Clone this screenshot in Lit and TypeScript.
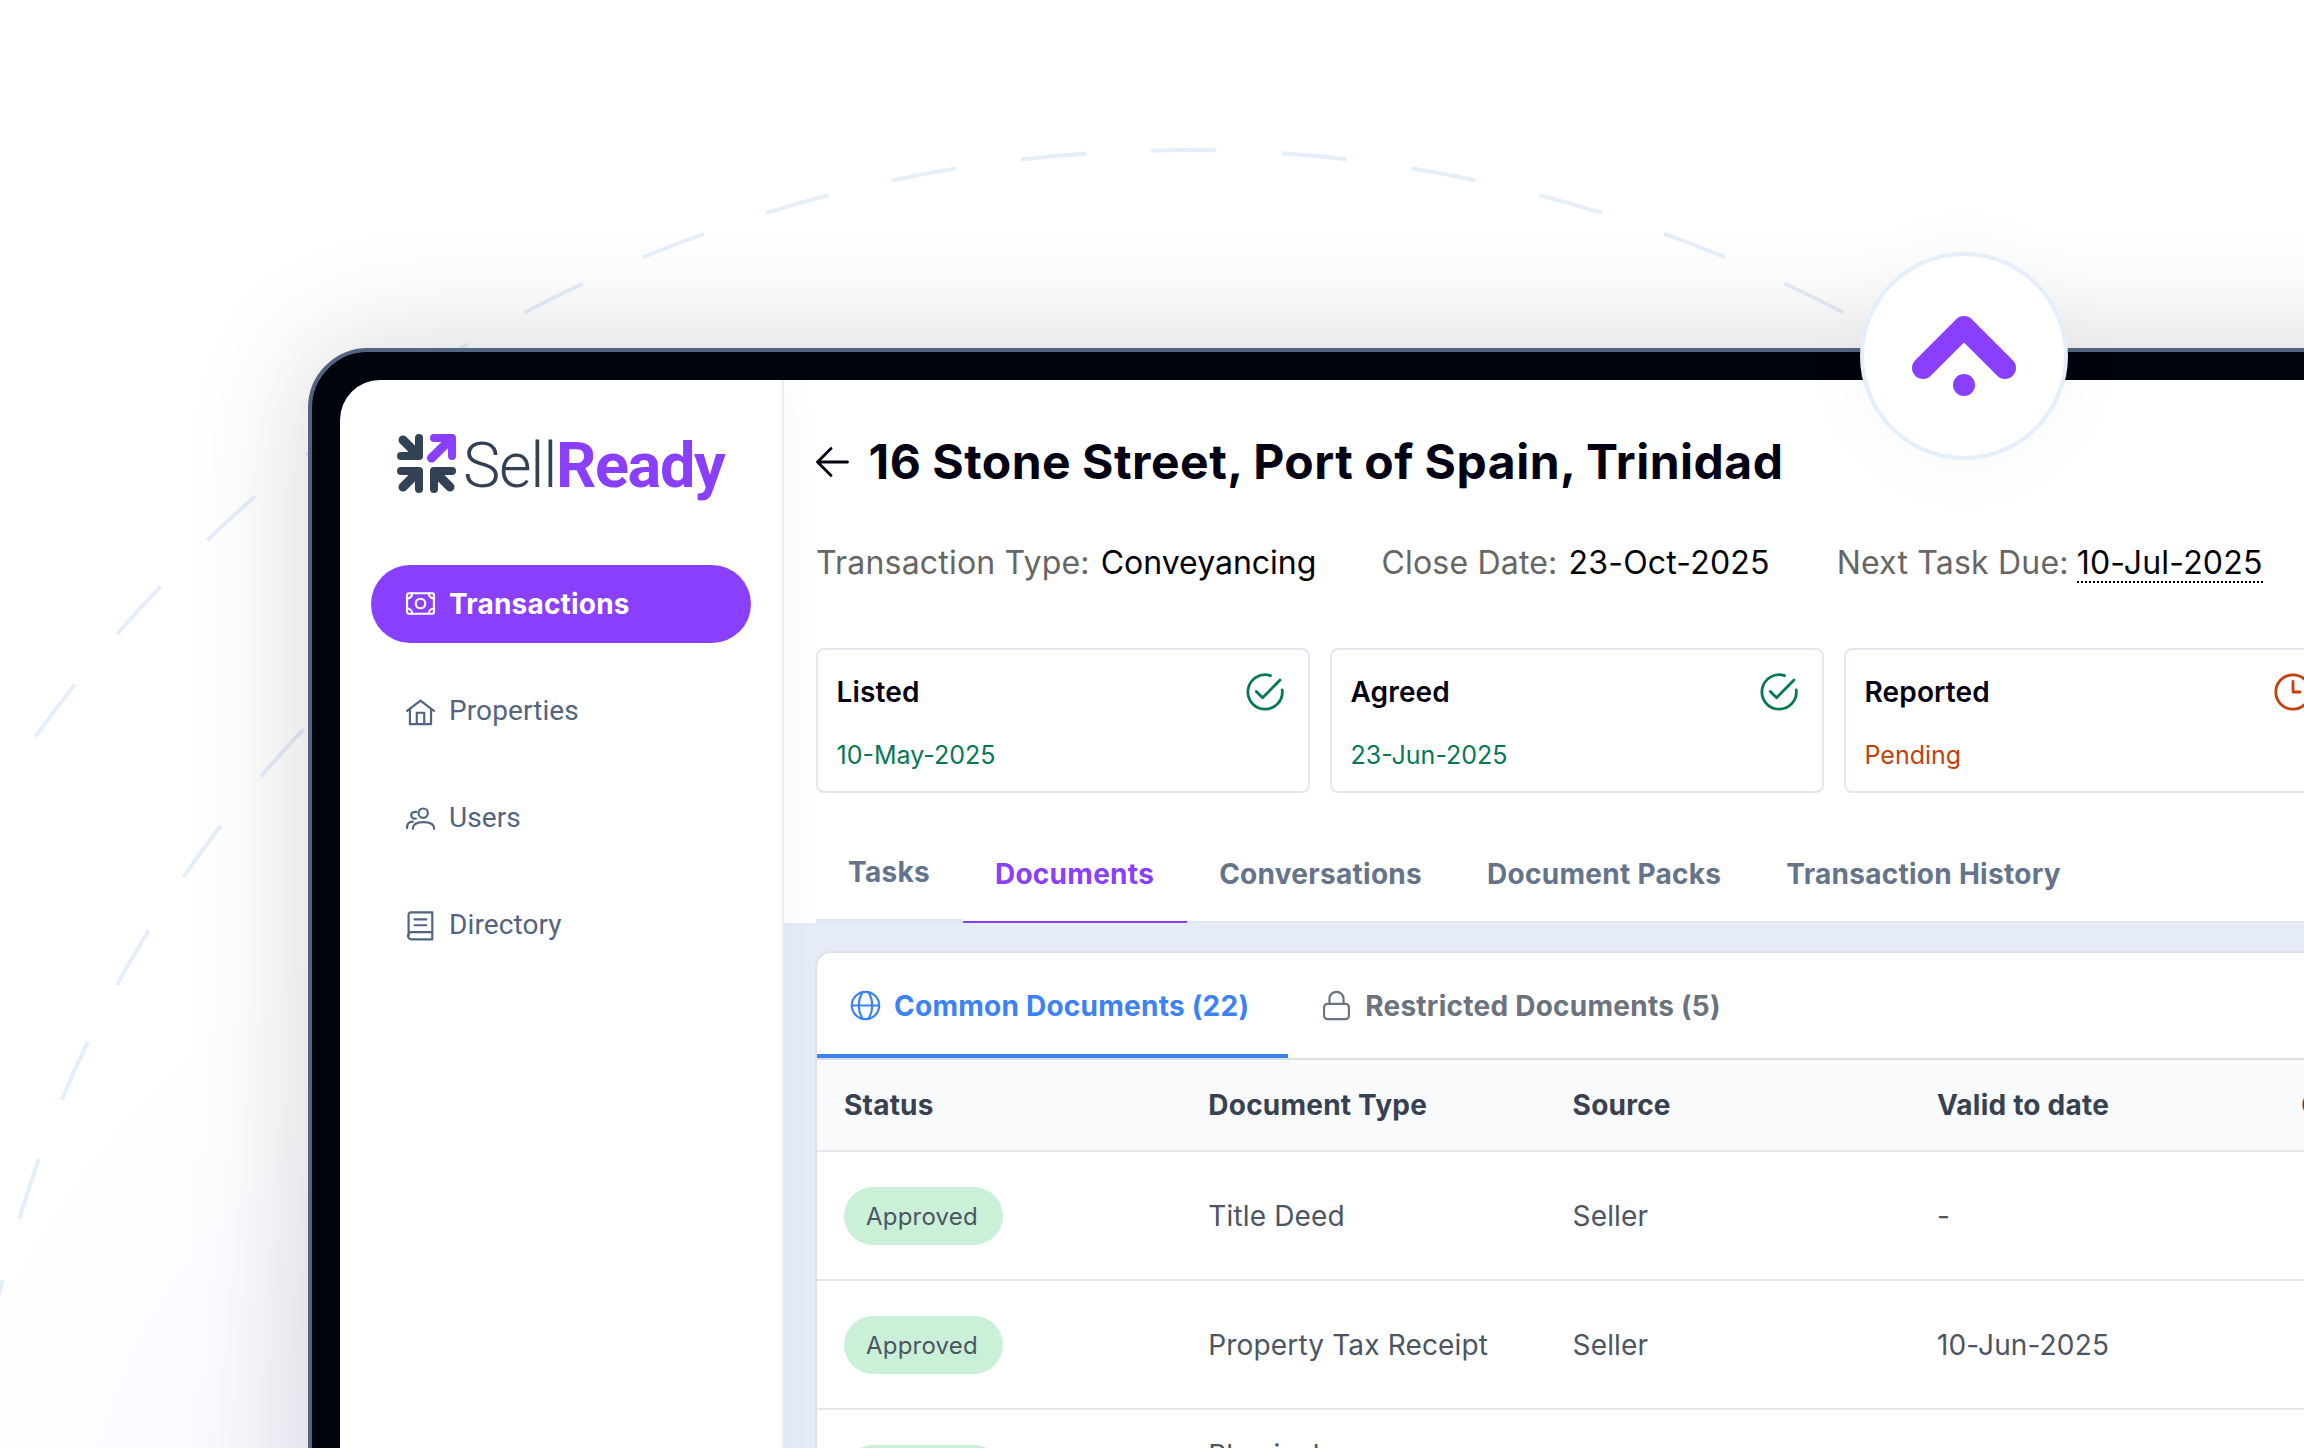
import { LitElement, css, html, svg } from "lit";
import { customElement, state } from "lit/decorators.js";
import { classMap } from "lit/directives/class-map.js";

const icons = {
  money: svg`
    <rect x="1" y="4.100" width="26" height="19.800" rx="1.600" />
    <circle cx="14" cy="14" r="4.600" />
    <path d="M1 9.200a5 5 0 0 0 5-5M22 4.200a5 5 0 0 0 5 5M27 18.800a5 5 0 0 0-5 5M6 23.800a5 5 0 0 0-5-5" />`,
  home: svg`
    <path d="M1 14.300L14 4.500l13 9.800" />
    <path d="M3.800 12.400v14.800h20.400V12.400M10.400 27V16.200h7.200V27" />`,
  users: svg`
    <circle cx="16.600" cy="9.800" r="4.500" />
    <path d="M6.600 24.900c0-5 3.600-6.400 10.200-6.400S27.200 19.900 27.200 24.900" />
    <path d="M10 8.600c-2.900-.5-5 .9-5 3.300s2.200 3.700 4.600 3.100M1 24.200c0-4.300 1.500-6.200 5.600-6.200" />`,
  book: svg`
    <path d="M2.500 25V4.600A2.300 2.300 0 0 1 4.800 2.300H25.400V28.400H5.400A3.400 3.400 0 0 1 5.400 21.400H25.400" />
    <path d="M8.300 9h11.300M8.300 14.700h11.300" />`,
  globe: svg`
    <circle cx="14" cy="14" r="13.200" />
    <path d="M.8 14h26.400M11 1.200C6.400 9.500 6.400 18.500 11 26.800M17 1.200c4.600 8.300 4.600 17.300 0 25.600" />`,
  lock: svg`
    <rect x="2" y="12.400" width="24" height="14.800" rx="3.400" />
    <path d="M7.200 12.400V7.600a6.800 6.800 0 0 1 13.600 0v4.800" />`,
};

@customElement("app-root")
export class AppRoot extends LitElement {
  @state() activeNav = "Transactions";
  @state() activeTab = "Documents";

  navItems = [
    { label: "Transactions", icon: icons.money },
    { label: "Properties", icon: icons.home },
    { label: "Users", icon: icons.users },
    { label: "Directory", icon: icons.book },
  ];

  stages = [
    { name: "Listed", value: "10-May-2025", done: true },
    { name: "Agreed", value: "23-Jun-2025", done: true },
    { name: "Reported", value: "Pending", done: false },
  ];

  tabs = ["Tasks", "Documents", "Conversations", "Document Packs", "Transaction History"];

  columns = ["Status", "Document Type", "Source", "Valid to date", "Created"];

  documents = [
    { status: "Approved", type: "Title Deed", source: "Seller", valid: "-" },
    { status: "Approved", type: "Property Tax Receipt", source: "Seller", valid: "10-Jun-2025" },
    { status: "Approved", type: "Physical\nInspection", source: "Seller", valid: "-" },
  ];
  //----------------------------------------------------
  render() {
    return html`
      <div class="stage">
        ${this.renderArcs()}
        <div class="device">
          <div class="screen">
            ${this.renderSidebar()}
            <main class="main">
              ${this.renderHeader()}
              <section class="body">${this.renderPanel()}</section>
            </main>
          </div>
        </div>
        <div class="bubble">
          <svg width="104" height="80" viewBox="0 0 104 80">
            <path d="M11 52L52 11L93 52" fill="none" stroke="#8a3ffc" stroke-width="22" stroke-linecap="round" stroke-linejoin="round" />
            <circle cx="52" cy="69" r="11" fill="#8a3ffc" />
          </svg>
        </div>
      </div>
    `;
  }
  //----------------------------------------------------
  renderArcs() {
    return html`
      <svg class="arcs" viewBox="0 0 2304 1448">
        <path d="M2602 1568A1418 1418 0 0 0 1184 150A1418 1418 0 0 0 -234 1568" stroke-dasharray="65.3" stroke-dashoffset="25.45" />
        <path d="M1184 352A1216 1216 0 0 0 -32 1568" stroke-dasharray="63.5" stroke-dashoffset="31.5" />
      </svg>
    `;
  }
  //----------------------------------------------------
  renderSidebar() {
    return html`
      <aside class="sidebar">
        <div class="logo">
          <svg width="60" height="60" viewBox="0 0 60 60" fill="none" stroke="#334155" stroke-width="8" stroke-linecap="round" stroke-linejoin="round">
            <path d="M22 4V22H4M22 55V37H4M37 55V37H55" />
            <path d="M6 6L21 21M6 53L21 38M53 53L38 38" stroke-width="9" />
            <path d="M37 4H55V22" stroke="#8a3ffc" />
            <path d="M34.500 24L54 5" stroke="#8a3ffc" stroke-width="9" />
          </svg>
          <span class="brand"><span class="sell">Sell</span><span class="ready">Ready</span></span>
        </div>
        <nav class="nav">
          ${this.navItems.map(
            (item) => html`
              <a
                class=${classMap({ item: true, active: item.label === this.activeNav })}
                @click=${() => (this.activeNav = item.label)}
              >
                <svg class="icon" viewBox="0 0 28 28">${item.icon}</svg>
                ${item.label}
              </a>
            `
          )}
        </nav>
      </aside>
    `;
  }
  //----------------------------------------------------
  renderHeader() {
    return html`
      <header class="header">
        <div class="title-row">
          <svg width="34" height="32" viewBox="0 0 34 32" fill="none" stroke="#030014" stroke-width="2.800" stroke-linecap="round" stroke-linejoin="round">
            <path d="M31.500 16H1.500M15 2.500L1.500 16L15 29.500" />
          </svg>
          <h1>16 Stone Street, Port of Spain, Trinidad</h1>
        </div>
        <div class="meta">
          <div class="pair"><span class="label">Transaction Type:</span><span class="kind">Conveyancing</span></div>
          <div class="pair"><span class="label">Close Date:</span><span>23-Oct-2025</span></div>
          <div class="pair due"><span class="label">Next Task Due:</span><span class="date">10-Jul-2025</span></div>
        </div>
        <div class="cards">
          ${this.stages.map(
            (stage) => html`
              <div class=${classMap({ card: true, pending: !stage.done })}>
                <div class="card-top">
                  <span class="card-name">${stage.name}</span>
                  ${stage.done ? this.checkIcon() : this.clockIcon()}
                </div>
                <div class="card-value">${stage.value}</div>
              </div>
            `
          )}
        </div>
        <div class="tabs">
          ${this.tabs.map(
            (tab, index) => html`
              <a
                class=${classMap({ tab: true, first: index === 0, active: tab === this.activeTab })}
                @click=${() => (this.activeTab = tab)}
                >${tab}</a
              >
            `
          )}
          <span class="tab-rest"></span>
        </div>
      </header>
    `;
  }
  checkIcon() {
    return html`
      <svg class="stage-icon" viewBox="0 0 38 38">
        <path d="M24.500 2.600A17.200 17.200 0 1 0 36.200 17" />
        <path d="M10.300 18.500l6.300 6.300L34 7" />
      </svg>
    `;
  }
  clockIcon() {
    return html`
      <svg class="stage-icon" viewBox="0 0 38 38">
        <circle cx="19" cy="19" r="17.200" />
        <path d="M19 8.500V19h7" />
      </svg>
    `;
  }
  //----------------------------------------------------
  renderPanel() {
    return html`
      <div class="panel">
        <div class="doc-tabs">
          <a class="doc-tab active">
            <svg class="icon" viewBox="0 0 28 28">${icons.globe}</svg>Common Documents (22)
          </a>
          <a class="doc-tab">
            <svg class="icon" viewBox="0 0 28 28">${icons.lock}</svg>Restricted Documents (5)
          </a>
        </div>
        <div class="row head">${this.columns.map((col) => html`<div>${col}</div>`)}</div>
        ${this.documents.map(
          (doc) => html`
            <div class="row">
              <div><span class="badge">${doc.status}</span></div>
              <div class="type">${doc.type}</div>
              <div>${doc.source}</div>
              <div>${doc.valid}</div>
              <div></div>
            </div>
          `
        )}
      </div>
    `;
  }
  //----------------------------------------------------
  static styles = css`
    :host {
      display: block;
      font-family: Inter, "Liberation Sans", sans-serif;
      color: #000;
    }
    * {
      box-sizing: border-box;
    }
    .stage {
      position: relative;
      width: 2304px;
      height: 1448px;
      padding: 348px 0 0 308px;
      overflow: hidden;
      background: radial-gradient(
          circle 740px at 650px 1600px,
          rgba(110, 70, 255, 0.1) 0%,
          rgba(120, 66, 255, 0.045) 50%,
          rgba(138, 63, 252, 0.018) 74%,
          rgba(138, 63, 252, 0) 100%
        ),
        #fff;
    }
    .arcs {
      position: absolute;
      left: 0;
      top: 0;
      width: 2304px;
      height: 1448px;
      fill: none;
      stroke: #e5eefb;
      stroke-width: 4;
    }
    .device {
      position: relative;
      width: 2400px;
      height: 1500px;
      border: 4px solid #52647f;
      border-radius: 60px;
      padding: 28px;
      background: #00040d;
      box-shadow: 0 0 124px rgba(0, 0, 0, 0.16);
    }
    .screen {
      display: flex;
      height: 100%;
      border-radius: 40px;
      overflow: hidden;
      background: #fff;
    }
    .bubble {
      position: absolute;
      left: 1860px;
      top: 252px;
      width: 208px;
      height: 208px;
      display: flex;
      justify-content: center;
      padding-top: 60px;
      border: 4px solid #e5eefb;
      border-radius: 50%;
      background: #fff;
      box-shadow: 0 4px 90px rgba(0, 0, 0, 0.03);
    }

    /* sidebar */
    .sidebar {
      position: relative;
      flex: none;
      width: 444px;
      padding: 54px 31px 0;
      border-right: 2px solid #e5eefb;
      box-shadow: 0 0 40px rgba(0, 0, 0, 0.04);
      font-family: Roboto, sans-serif;
    }
    .logo {
      display: flex;
      align-items: flex-start;
      gap: 6.5px;
      height: 130.5px;
      padding-left: 25.5px;
    }
    .brand {
      display: flex;
      font-size: 63px;
      line-height: 63px;
    }
    .sell {
      font-weight: 300;
      color: #334155;
      letter-spacing: -1.3px;
    }
    .ready {
      font-weight: 700;
      color: #8a3ffc;
      letter-spacing: -1.4px;
    }
    .nav {
      display: flex;
      flex-direction: column;
      gap: 28.6px;
    }
    .item {
      display: flex;
      align-items: center;
      gap: 14px;
      height: 78.4px;
      padding-left: 35px;
      border-radius: 40px;
      font-size: 28px;
      letter-spacing: 0.1px;
      color: #52647f;
    }
    .item.active {
      background: #8a3ffc;
      color: #fff;
      font-family: Inter, sans-serif;
      font-weight: 700;
      letter-spacing: 0.2px;
    }
    .icon {
      flex: none;
      width: 29px;
      height: 29px;
      overflow: visible;
      fill: none;
      stroke: currentColor;
      stroke-width: 2.1;
      stroke-linejoin: round;
      stroke-linecap: round;
    }

    /* transaction header */
    .main {
      flex: 1;
      min-width: 0;
      display: flex;
      flex-direction: column;
    }
    .header {
      padding: 50px 0 0 32px;
    }
    .title-row {
      display: flex;
      align-items: center;
      gap: 18.5px;
      height: 64px;
    }
    h1 {
      margin: 0;
      font-size: 48px;
      font-weight: 700;
      line-height: 64px;
      letter-spacing: 0.5px;
      word-spacing: -1px;
      color: #030014;
      white-space: nowrap;
    }
    .meta {
      display: flex;
      gap: 65px;
      margin-top: 49px;
      font-size: 32px;
      line-height: 40px;
      letter-spacing: 0.2px;
      white-space: nowrap;
    }
    .pair {
      display: flex;
      gap: 11px;
    }
    .pair.due {
      gap: 8px;
      margin-left: 2px;
    }
    .label {
      color: #666;
    }
    .kind {
      letter-spacing: 0;
    }
    .date {
      height: 40px;
      border-bottom: 2px dotted #000;
    }
    .cards {
      display: flex;
      gap: 20.5px;
      margin-top: 65px;
    }
    .card {
      flex: none;
      width: 493.5px;
      height: 145px;
      padding: 23px 24px 0 18.5px;
      border: 2px solid #e2e8f0;
      border-radius: 8px;
      color: #047857;
    }
    .card.pending {
      color: #c2410c;
    }
    .card-top {
      display: flex;
      justify-content: space-between;
      align-items: center;
      height: 38px;
    }
    .card-name {
      font-size: 28px;
      font-weight: 600;
      letter-spacing: 0.15px;
      color: #030014;
    }
    .card-value {
      margin-top: 26px;
      font-size: 25px;
      line-height: 36px;
    }
    .stage-icon {
      width: 38px;
      height: 38px;
      fill: none;
      stroke: currentColor;
      stroke-width: 2.8;
      stroke-linecap: round;
      stroke-linejoin: round;
    }
    .tabs {
      display: flex;
      margin-top: 49px;
      height: 81px;
      font-size: 28px;
      line-height: 34px;
      font-weight: 700;
      letter-spacing: 0.28px;
      color: #64748b;
    }
    .tab {
      padding: 15px 33px 0 32px;
      border-bottom: 2px solid #e2e8f0;
      white-space: nowrap;
    }
    .tab.first {
      padding-top: 13px;
      border-bottom-width: 4px;
    }
    .tab.active {
      color: #8a3ffc;
      border-color: #8a3ffc;
    }
    .tab-rest {
      flex: 1;
      border-bottom: 2px solid #e2e8f0;
    }

    /* documents */
    .body {
      flex: 1;
      padding: 28px 0 0 31px;
      background: #e5ecf8;
    }
    .panel {
      border: 2px solid #dfe1e5;
      border-radius: 16px 0 0 0;
      overflow: hidden;
      height: 100%;
      background: #fff;
    }
    .doc-tabs {
      display: flex;
      height: 107px;
      border-bottom: 2px solid #dcdfe4;
    }
    .doc-tab {
      display: flex;
      align-items: center;
      gap: 14px;
      padding: 4px 39px 0 34px;
      border-bottom: 4px solid transparent;
      font-size: 28px;
      font-weight: 700;
      letter-spacing: 0.25px;
      color: #6b7280;
      white-space: nowrap;
    }
    .doc-tab.active {
      color: #3b82f6;
      border-color: #3b82f6;
    }
    .row {
      display: grid;
      grid-template-columns: repeat(5, 364.3px);
      align-items: center;
      height: 129px;
      padding-left: 27px;
      border-bottom: 2px solid #e5e7eb;
      font-size: 28px;
      line-height: 38px;
      letter-spacing: 0.15px;
      color: #4b5563;
    }
    .row.head {
      height: 92px;
      background: #f8fafc;
      font-weight: 700;
      letter-spacing: 0.22px;
      color: #374151;
    }
    .type {
      white-space: pre-line;
    }
    .badge {
      display: inline-flex;
      align-items: center;
      height: 58px;
      padding: 2px 25px 0 22px;
      border-radius: 29px;
      font-size: 24px;
      letter-spacing: 0.2px;
      background: #cbf0d8;
    }
  `;
}
